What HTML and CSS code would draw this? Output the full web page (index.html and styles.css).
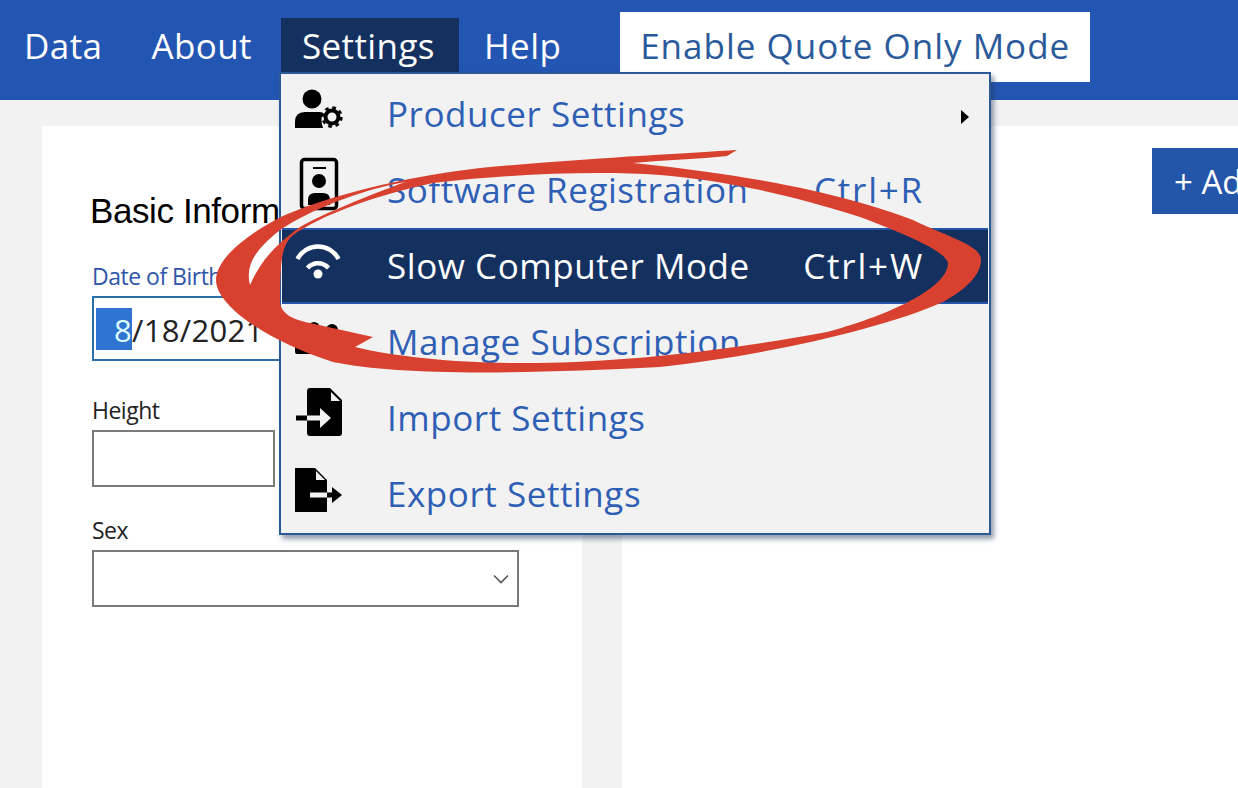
FILE: index.html
```html
<!DOCTYPE html>
<html lang="en">
<head>
    <meta charset="UTF-8">
    <meta name="viewport" content="width=device-width, initial-scale=1.0">
    <title>Settings</title>
    <link rel="stylesheet" href="styles.css">
</head>
<body>
    <!-- Top navigation -->
    <nav class="navbar">
        <a class="nav-item">Data</a>
        <a class="nav-item nav-about">About</a>
        <a class="nav-item nav-active">Settings</a>
        <a class="nav-item">Help</a>
        <button class="quote-btn">Enable Quote Only Mode</button>
    </nav>

    <main class="content">
        <section class="panel panel-form">
            <h2>Basic Information</h2>
            <label class="field-label label-active">Date of Birth</label>
            <div class="field field-date"><span class="selected">8</span>/18/2021</div>
            <label class="field-label">Height</label>
            <div class="field field-height"></div>
            <label class="field-label">Sex</label>
            <div class="field field-select">
                <svg class="chevron" width="16" height="10" viewBox="0 0 16 10"><path d="M1 1.5 L8 8.5 L15 1.5" fill="none" stroke="#555" stroke-width="1.6"/></svg>
            </div>
        </section>
        <section class="panel panel-side">
            <button class="add-btn">+ Add</button>
        </section>
    </main>

    <!-- Settings dropdown -->
    <div class="menu">
        <div class="menu-item">
            <svg class="menu-icon" viewBox="0 0 50 56">
                <circle cx="18" cy="13" r="9.5"/>
                <path d="M1 42 V36 Q1 26 11 26 H25 Q28 26 29 27 Q26 34 29 42 Z"/>
                <circle cx="38" cy="31" r="6.5" fill="none" stroke="#000" stroke-width="4"/>
                <circle cx="38" cy="31" r="9.5" fill="none" stroke="#000" stroke-width="2.5" stroke-dasharray="3.7 3.76"/>
            </svg>
            <span class="menu-text">Producer Settings</span>
            <span class="submenu-arrow"></span>
        </div>
        <div class="menu-item">
            <svg class="menu-icon" viewBox="0 0 50 56">
                <rect x="7.5" y="-2.5" width="35" height="49" rx="3" fill="none" stroke="#000" stroke-width="3.5"/>
                <path d="M19 6 H32" stroke="#000" stroke-width="2"/>
                <circle cx="25" cy="19" r="7"/>
                <path d="M14 43 V38 Q14 31 21 31 H29 Q36 31 36 38 V43 Z"/>
            </svg>
            <span class="menu-text">Software Registration</span>
            <span class="shortcut">Ctrl+R</span>
        </div>
        <div class="menu-item menu-item-active">
            <svg class="menu-icon" viewBox="0 0 50 56">
                <path d="M3.5 21 A23 23 0 0 1 44.5 21" fill="none" stroke="#fff" stroke-width="4.5"/>
                <path d="M13.5 30 A14 14 0 0 1 34.5 30" fill="none" stroke="#fff" stroke-width="4.5"/>
                <circle cx="24" cy="36" r="4.5" fill="#fff"/>
            </svg>
            <span class="menu-text">Slow Computer Mode</span>
            <span class="shortcut">Ctrl+W</span>
        </div>
        <div class="menu-item">
            <svg class="menu-icon" viewBox="0 0 50 56">
                <circle cx="20" cy="14" r="6"/>
                <circle cx="38" cy="16" r="6"/>
                <rect x="1" y="24" width="44" height="16" rx="2"/>
            </svg>
            <span class="menu-text">Manage Subscription</span>
        </div>
        <div class="menu-item">
            <svg class="menu-icon" viewBox="0 0 50 56">
                <path d="M13 1 Q13 -2 16 -2 H36 L48 10 V43 Q48 46 45 46 H16 Q13 46 13 43 Z"/>
                <path d="M37 2 V11 H46 Z" fill="#f2f2f2"/>
                <path d="M2 25.5 H13 V30.5 H2 Z"/>
                <path d="M13 25.5 H26 V18 L37 28 L26 38 V30.5 H13 Z" fill="#f2f2f2"/>
            </svg>
            <span class="menu-text">Import Settings</span>
        </div>
        <div class="menu-item">
            <svg class="menu-icon" viewBox="0 0 50 56">
                <path d="M1 2 H21 L33 14 V46 H1 Z"/>
                <path d="M22 5 V14 H31 Z" fill="#f2f2f2"/>
                <path d="M16 26.5 H33 V31.5 H16 Z" fill="#f2f2f2"/>
                <path d="M33 26.5 H38 V21 L48 29 L38 37 V31.5 H33 Z"/>
            </svg>
            <span class="menu-text">Export Settings</span>
        </div>
    </div>

    <!-- Hand drawn red circle over the screenshot -->
    <svg class="swoosh" width="1238" height="788" viewBox="0 0 1238 788">
        <path fill="#d8412f" fill-rule="evenodd" d="M737 150 C690 153 590 158 480 168 C420 175 345 190 285 215 C250 232 216 258 216 280 C216 305 265 340 333 362 C400 376 520 374 660 367 C760 356 880 330 943 302 C965 290 981 275 981 260 C981 245 950 238 913 220 C860 200 780 178 633 163 C665 160 700 159 727 156 Z
        M433 183 C380 194 320 215 292 236 C282 246 280 260 280 303 C282 315 295 320 310 323 L373 337 L355 347 C400 358 470 364 537 363 C620 362 720 352 827 332 C880 318 948 290 948 263 C945 250 900 232 860 217 C790 195 730 181 660 175 C590 170 500 175 433 183 Z
        M250 285 C245 265 255 250 280 230 C310 210 360 190 405 182 C370 195 320 215 300 227 C275 245 260 262 250 285 Z"/>
    </svg>
</body>
</html>
```

FILE: styles.css
```css
/* General Styling */
* {
    margin: 0;
    padding: 0;
    box-sizing: border-box;
}

body {
    font-family: 'Open Sans', 'Noto Sans', sans-serif;
    background: #f2f2f2;
    width: 1238px;
    height: 788px;
    overflow: hidden;
    position: relative;
}

.navbar {
    height: 100px;
    background: #2355b3;
    display: flex;
    align-items: flex-start;
}

.nav-item {
    height: 54px;
    margin-top: 18px;
    padding: 0 24px;
    color: #fff;
    font-size: 35px;
    line-height: 56px;
    letter-spacing: 0.4px;
}

.nav-about {
    margin-left: 1px;
    margin-right: 5px;
}

.nav-active {
    background: #14305f;
    padding: 0 24px 0 21px;
    margin-right: 1px;
}

.quote-btn {
    margin: 12px 0 0 35px;
    width: 470px;
    height: 70px;
    padding-bottom: 3px;
    background: #fff;
    border: none;
    color: #2a5a9a;
    font-family: inherit;
    font-size: 35px;
    letter-spacing: 1px;
    flex: none;
}

.content {
    display: flex;
    padding: 26px 0 0 42px;
    gap: 40px;
    height: 688px;
}

.panel {
    background: #fff;
    flex: none;
}

.panel-form {
    width: 540px;
    padding: 62px 0 0 50px;
}

.panel-side {
    width: 616px;
    padding: 22px 0 0 530px;
    overflow: hidden;
}

h2 {
    font-size: 35px;
    font-weight: 400;
    line-height: 46px;
    color: #000;
    font-family: 'Liberation Sans', sans-serif;
    letter-spacing: -0.4px;
    margin: 0 0 27px -2px;
    white-space: nowrap;
}

.field-label {
    display: block;
    font-size: 23px;
    line-height: 30px;
    color: #222;
    letter-spacing: -0.5px;
    margin-bottom: 5px;
}

.label-active {
    color: #2f55a8;
}

.field {
    width: 427px;
    height: 57px;
    border: 2px solid #7a7a7a;
    margin-bottom: 28px;
    position: relative;
}

.field-date {
    height: 65px;
    border-color: #2a6fa8;
    margin-bottom: 34px;
    padding: 10px 0 0 2px;
    font-size: 31px;
    line-height: 44px;
    color: #222;
    display: flex;
    letter-spacing: 0.3px;
}

.selected {
    width: 36px;
    height: 42px;
    background: #2e74d0;
    color: #dff;
    text-align: right;
}

.field-height {
    width: 183px;
}

.chevron {
    position: absolute;
    right: 8px;
    top: 22px;
}

.add-btn {
    width: 200px;
    height: 66px;
    background: #2355a8;
    color: #fff;
    border: none;
    text-align: left;
    padding-left: 22px;
    font-family: inherit;
    font-size: 33px;
    white-space: nowrap;
}

/* Dropdown */
.menu {
    position: absolute;
    left: 279px;
    top: 72px;
    width: 712px;
    height: 463px;
    padding: 2px 1px;
    background: #f2f2f2;
    border: 2px solid #2c5a96;
    box-shadow: 3px 4px 5px rgba(40, 60, 90, 0.5);
}

.menu-item {
    height: 76px;
    display: flex;
    align-items: flex-start;
    padding-left: 12px;
}

.menu-item-active {
    background: #14305f;
    border: 2px solid #2355a8;
    border-width: 2px 0;
}

.menu-icon {
    width: 50px;
    height: 56px;
    margin-top: 10px;
    margin-right: 43px;
    overflow: visible;
    flex: none;
}

.menu-item-active .menu-icon {
    margin-top: 8px;
}

.menu-text {
    font-size: 35px;
    line-height: 76px;
    color: #2f5fb5;
    letter-spacing: 0.55px;
    white-space: nowrap;
}

.menu-item-active .menu-text,
.menu-item-active .shortcut {
    color: #fff;
    line-height: 72px;
}

.shortcut {
    position: absolute;
    right: 65px;
    font-size: 35px;
    line-height: 76px;
    color: #2f5fb5;
    letter-spacing: 1.8px;
}

.submenu-arrow {
    position: absolute;
    left: 680px;
    top: 36px;
    border-left: 8px solid #000;
    border-top: 7px solid transparent;
    border-bottom: 7px solid transparent;
}

.swoosh {
    position: absolute;
    left: 0;
    top: 0;
}
```
